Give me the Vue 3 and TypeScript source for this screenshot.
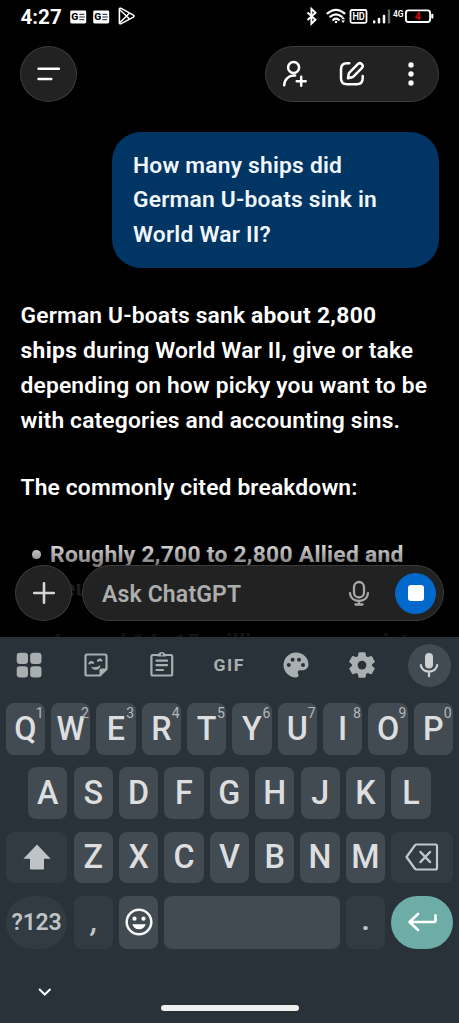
<script setup lang="ts">
interface Key {
  label: string
  hint?: string
}

const topRow: Key[] = 'QWERTYUIOP'.split('').map((label, i) => ({ label, hint: String((i + 1) % 10) }))
const homeRow: string[] = 'ASDFGHJKL'.split('')
const bottomRow: string[] = 'ZXCVBNM'.split('')
</script>

<template>
  <div class="screen">
    <div class="status">
      <span class="clock">4:27</span>
      <svg v-for="n in 2" :key="n" class="news" width="17" height="14" viewBox="0 0 17 14">
        <rect x="0.2" y="0.5" width="16" height="13" rx="1.4" fill="#fff" />
        <text x="1.200" y="10.300" font-size="9.500" font-weight="800" textLength="7" lengthAdjust="spacingAndGlyphs" fill="#000">G</text>
        <path d="M9.300 4.300h5M9.300 7h5.500M9.300 9.700h5" stroke="#222" stroke-width="1" />
      </svg>
      <svg class="play" width="18" height="18" viewBox="0 0 18 18" fill="none" stroke="#fff" stroke-linejoin="round">
        <path d="M1.4 2.2v13.6q.3 1.4 1.8.8l12.2-6.5q1.2-1 0-2L3.200 1.400q-1.500-.5-1.800.8z" stroke-width="1.6" />
        <path d="M2 3l9.600 9M2 15.500l9.600-9.500" stroke-width="1.500" />
      </svg>
      <svg class="signals" width="130" height="20" viewBox="0 0 130 20" fill="none" stroke="#fff">
        <path d="M2.500 5.500l8 7.300-4.100 3.900V1.800l4.100 3.900-8 7.300" stroke-width="1.900" />
        <g stroke-width="2.200" stroke-linecap="round">
          <path d="M22.500 6.300q8.500-7 17 0M25.300 9.600q5.700-4.500 11.400 0M28.200 12.800q2.800-2.300 5.600 0" />
        </g>
        <circle cx="31" cy="15" r="1.300" fill="#fff" stroke="none" />
        <path d="M36.200 12.200l1.900-2.400 1.900 2.400zM36.200 13.500l1.900 2.400 1.900-2.400z" fill="#fff" stroke="none" />
        <rect x="45.500" y="3" width="16" height="12.800" rx="1.500" stroke-width="1.800" />
        <text x="47.400" y="12.900" font-size="10" font-weight="600" textLength="12.400" lengthAdjust="spacingAndGlyphs" fill="#fff" stroke="none">HD</text>
        <path d="M69.200 14.500v.8M74 12V15.300M79 9V15.300" stroke-width="2.500" stroke-linecap="round" />
        <path d="M84 2.500V16.500" stroke="#666" stroke-width="2.400" />
        <text x="88" y="9.600" font-size="9.500" font-weight="600" textLength="10.600" lengthAdjust="spacingAndGlyphs" fill="#fff" stroke="none">4G</text>
        <rect x="100.900" y="3.400" width="24.200" height="11.600" rx="2.500" stroke-width="1.900" />
        <path d="M127.300 7.800v2.800" stroke-width="2.200" stroke-linecap="round" />
        <text x="109.800" y="12.900" font-size="10.500" font-weight="600" fill="#e00808" stroke="none">4</text>
      </svg>
    </div>

    <header class="topbar">
      <button class="round" aria-label="Menu">
        <svg width="26" height="16" viewBox="0 0 26 16" stroke="#fff" stroke-width="2.600" stroke-linecap="round">
          <path d="M2.600 2.700h20.200M2.600 13h12.600" />
        </svg>
      </button>
      <div class="actions">
        <svg class="person" width="28" height="28" viewBox="0 0 28 28" fill="none" stroke="#fff" stroke-width="2.500" stroke-linecap="round">
          <circle cx="13.600" cy="7.500" r="5.500" />
          <path d="M4.200 25.300c.3-6 4.600-9.800 9.500-9.800h1.400M21.200 16.700v9M16.700 21.200h9" />
        </svg>
        <svg width="28" height="28" viewBox="0 0 28 28" fill="none" stroke="#fff" stroke-width="2.500" stroke-linecap="round" stroke-linejoin="round">
          <path d="M11.300 3.300H9q-6 0-6 6v9q0 6 6 6h9.700q6 0 6-6v-2.200" />
          <path d="M10 18.300l.7-4.300q.2-1 .9-1.700l8.200-8.200a2.800 2.800 0 0 1 4 4l-8.200 8.200q-.7.7-1.600.9z" />
        </svg>
        <svg class="more" width="8" height="26" viewBox="0 0 8 26" fill="#fff">
          <circle cx="4" cy="4" r="2.700" /><circle cx="4" cy="13" r="2.700" /><circle cx="4" cy="22" r="2.700" />
        </svg>
      </div>
    </header>

    <main class="chat">
      <div class="bubble">How many ships did<br>German U-boats sink in<br>World War II?</div>
      <p class="answer">
        German U-boats sank <b>about 2,800<br>ships</b> during World War II, give or take<br>depending on how picky you want to be<br>with categories and accounting sins.
      </p>
      <p class="answer">The commonly cited breakdown:</p>
      <ul>
        <li>Roughly 2,700 to 2,800 Allied and<br>neutral merchant vessels</li>
        <li class="next">Around 14–15 million gross register</li>
      </ul>
      <div class="fade"></div>
      <div class="composer">
        <button class="round" aria-label="Add">
          <svg width="24" height="24" viewBox="0 0 24 24" stroke="#d5d5d5" stroke-width="2.600" stroke-linecap="round">
            <path d="M12 2.200v19.600M2.200 12h19.600" />
          </svg>
        </button>
        <div class="field">
          <span class="hint">Ask ChatGPT</span>
          <svg class="mic" width="22" height="26" viewBox="0 0 22 26" fill="none" stroke="#a8a8a8" stroke-width="2.300">
            <rect x="6" y="2" width="10" height="15.500" rx="5" />
            <path d="M2 13.200c.4 4.800 4.200 7.800 9 7.800s8.600-3 9-7.800M11 21v3.500M7.500 24.500h7" stroke-linecap="round" />
          </svg>
          <button class="stop" aria-label="Stop"><i></i></button>
        </div>
      </div>
    </main>

    <section class="keyboard">
      <div class="tools">
        <svg width="26" height="26" viewBox="0 0 26 26">
          <rect x="0.700" y="0.700" width="11.300" height="11.300" rx="3.300" /><rect x="14.200" y="0.700" width="11.300" height="11.300" rx="3.300" />
          <rect x="0.700" y="14.200" width="11.300" height="11.300" rx="3.300" /><rect x="14.200" y="14.200" width="11.300" height="11.300" rx="3.300" />
        </svg>
        <svg width="26" height="26" viewBox="0 0 26 26">
          <path d="M4 2.500h18q1.500 0 1.500 1.500V17l-6.500 6.500H4q-1.500 0-1.500-1.500V4q0-1.500 1.500-1.500z" fill="none" stroke="#a9aeb1" stroke-width="2.200" />
          <path d="M16.500 24v-5.700q0-1.800 1.800-1.800H24z" />
          <path d="M8 14.700q5.500 1.700 9.500-1.700-.6 4.600-4.200 4.800-3.800.2-5.300-3.100z" />
          <path d="M6.500 11.300q1.500-2.200 3.500-.5M15 8.700q1.700-2 3.300-.2" fill="none" stroke="#a9aeb1" stroke-width="2.300" stroke-linecap="round" />
        </svg>
        <svg width="26" height="26" viewBox="0 0 26 26" fill="none" stroke="#a9aeb1" stroke-width="2.200" stroke-linecap="round">
          <rect x="2.400" y="3" width="20.800" height="20.500" rx="1.500" />
          <path d="M8.500 3.500q1-3.500 4.300-3.500T17.100 3.500v1H8.500z" fill="#a9aeb1" stroke="none" />
          <path d="M7.500 8.700h10.600M7.500 13.200h10.600M7.500 18h6.500" />
          <circle cx="12.800" cy="2.600" r="1" fill="#283238" stroke="none" />
        </svg>
        <svg width="32" height="26" viewBox="0 0 32 26">
          <text class="gif" x="0.500" y="18.700" textLength="31.500" lengthAdjust="spacingAndGlyphs">GIF</text>
        </svg>
        <svg width="26" height="26" viewBox="0 0 26 26">
          <path d="M13 .5C6 .5.500 6.200.500 13S6 25.500 13 25.500c1.700 0 2.600-1 2.600-2.400 0-1.300-.8-1.600-.8-2.700 0-1.300 1-2.200 2.400-2.200h2.300c3.400 0 6-2.400 6-6C25.500 5.700 19.900.5 13 .5z" />
          <g fill="#283238"><circle cx="5.800" cy="13" r="2" /><circle cx="9.600" cy="7.700" r="2" /><circle cx="16" cy="7.700" r="2" /><circle cx="20" cy="13" r="2" /></g>
        </svg>
        <svg width="26" height="26" viewBox="0 0 26 26">
          <path d="M10.200 1h5.600l.7 3.700 2.200 1.200L22.300 4.700l2.800 5-2.900 2.500v1.800l2.900 2.500-2.800 5-3.600-1.200-2.200 1.200-.7 3.600h-5.600l-.7-3.600-2.200-1.200-3.600 1.200-2.800-5 2.900-2.500v-1.800L.900 9.700l2.800-5 3.600 1.200 2.200-1.200z" stroke="#a9aeb1" stroke-width="1.400" stroke-linejoin="round" />
          <circle cx="13" cy="13.100" r="4.400" fill="#283238" />
        </svg>
        <span class="voice">
          <svg width="22" height="26" viewBox="0 0 22 26" fill="none" stroke="#ced0d2" stroke-width="2.200">
            <rect x="7" y="1" width="8" height="15.500" rx="4" fill="#ced0d2" stroke="none" />
            <path d="M2.800 13c.5 4 4 6.600 8.200 6.600s7.700-2.600 8.200-6.600M11 19.600v4.600" stroke-linecap="round" />
          </svg>
        </span>
      </div>

      <div class="row">
        <div v-for="k in topRow" :key="k.label" class="key">{{ k.label }}<sup>{{ k.hint }}</sup></div>
      </div>
      <div class="row inset">
        <div v-for="k in homeRow" :key="k" class="key">{{ k }}</div>
      </div>
      <div class="row">
        <div class="key dim wide">
          <svg width="28" height="26" viewBox="0 0 28 26"><path d="M14 .5L27.600 14.800H21V24.600q0 1-1 1H8q-1 0-1-1V14.800H.400z" fill="#bfc3c6" /></svg>
        </div>
        <div v-for="k in bottomRow" :key="k" class="key">{{ k }}</div>
        <div class="key dim wide">
          <svg width="34" height="28" viewBox="0 0 34 28" fill="none" stroke="#c3c7ca" stroke-width="2.200" stroke-linejoin="round" stroke-linecap="round">
            <path d="M11.500 1.500H30.500q1.500 0 1.500 1.500v22q0 1.500-1.500 1.500H11.500q-1 0-1.700-1L1.500 14l8.300-11.500q.7-1 1.700-1z" />
            <path d="M15.500 9l9.500 10M25 9l-9.500 10" stroke-width="2.500" />
          </svg>
        </div>
      </div>
      <div class="row last">
        <div class="key dim wide pill symbols">?123</div>
        <div class="key dim comma">,</div>
        <div class="key">
          <svg width="28" height="28" viewBox="0 0 28 28">
            <circle cx="14" cy="14" r="12.300" fill="none" stroke="#f4f5f5" stroke-width="2.500" />
            <circle cx="9.500" cy="10.700" r="2.100" fill="#fff" /><circle cx="18.500" cy="10.700" r="2.100" fill="#fff" />
            <path d="M7.300 16.300h13.400q-1.600 5-6.700 5t-6.700-5z" fill="#fff" />
          </svg>
        </div>
        <div class="key space"></div>
        <div class="key dim dot">.</div>
        <div class="key wide pill enter">
          <svg width="30" height="20" viewBox="0 0 30 20" fill="none" stroke="#fff" stroke-width="2.600" stroke-linecap="round" stroke-linejoin="round">
            <path d="M11 2L2.500 10 11 18M3 10h24q1.500 0 1.500-1.500V3.300" />
          </svg>
        </div>
      </div>

      <div class="nav">
        <svg class="down" width="14" height="10" viewBox="0 0 14 10" fill="none" stroke="#fff" stroke-width="2"><path d="M1.100 2l5.700 5.500L12.500 2" /></svg>
        <div class="home"></div>
      </div>
    </section>
  </div>
</template>

<style>
body { margin: 0; background: #000; }
</style>

<style scoped>
* { box-sizing: border-box; }
button { padding: 0; font: inherit; }
svg { display: block; flex: none; }
.screen {
  width: 459px; height: 1023px; overflow: hidden; background: #000; color: #fff;
  font-family: Roboto, "Liberation Sans", sans-serif;
  display: flex; flex-direction: column;
}
.status { height: 46px; flex: none; display: flex; align-items: flex-start; padding: 7px 0 0 20.500px; }
.clock { font-size: 20.600px; line-height: 20px; font-weight: 700; width: 49.500px; }
.news { margin: 3px 6.300px 0 0; }
.play { margin: 0 0 0 1px; }
.signals { margin: 0 24.300px 0 auto; }
.topbar { height: 57px; flex: none; display: flex; justify-content: space-between; padding: 0 20px; }
.round {
  width: 57px; height: 56px; flex: none; border-radius: 50%; border: 1px solid #3b3b3b; background: #222;
  display: flex; align-items: center; justify-content: center;
}
.actions {
  width: 174px; height: 56px; border: 1px solid #3b3b3b; border-radius: 28px; background: #222;
  display: flex; align-items: center; padding: 0 23.500px 0 13.500px;
}
.person { margin-right: 30px; }
.more { margin-left: auto; }
.chat { position: relative; flex: none; height: 534px; overflow: hidden; padding: 29px 20px 0; font-size: 22.800px; line-height: 34.900px; font-weight: 600; letter-spacing: .160px; white-space: nowrap; }
.bubble {
  width: 327px; height: 136px; margin-left: auto; border-radius: 29px; background: #003564; color: #f1f6fc;
  padding: 16.500px 21px; letter-spacing: .200px;
}
.answer { margin: 31px 0 0 .500px; }
.answer + .answer { margin-top: 32px; }
b { font-weight: 700; letter-spacing: .330px; }
ul { list-style: none; margin: 32px 0 0; padding: 0 0 0 30px; font-weight: 700; letter-spacing: .280px; }
li { position: relative; }
li::before { content: ""; position: absolute; left: -18px; top: 12.500px; width: 8.500px; height: 8.500px; border-radius: 50%; background: #fff; }
.next { margin-top: 19px; }
.fade { position: absolute; left: 0; right: 0; top: 422px; bottom: 0; background: linear-gradient(transparent, rgba(0, 0, 0, .16) 20px, rgba(0, 0, 0, .45) 37px, rgba(0, 0, 0, .88) 58px, rgba(0, 0, 0, .93)); }
.composer { position: absolute; left: 15px; right: 15px; top: 462px; display: flex; gap: 10px; }
.field {
  flex: 1; height: 56px; border: 1px solid #3b3b3b; border-radius: 28px; background: #222;
  display: flex; align-items: center; padding: 0 7px 0 19px;
}
.hint { color: #adadad; font-size: 23px; flex: 1; padding-top: 4px; }
.mic { margin-right: 25px; }
.stop { width: 41px; height: 41px; border: 0; border-radius: 50%; background: #0169cc; display: flex; align-items: center; justify-content: center; }
.stop i { width: 16px; height: 16px; border-radius: 3px; background: #fff; }
.keyboard { flex: 1; background: #283238; display: flex; flex-direction: column; }
.tools { height: 56px; margin: 0 -3.500px 10px -4.500px; display: grid; grid-template-columns: repeat(7, 1fr); place-items: center; fill: #a9aeb1; }
.gif { font-size: 17px; font-weight: 700; letter-spacing: 1.500px; fill: #a9aeb1; }
.voice { width: 43px; height: 43px; border-radius: 50%; background: #434b52; display: flex; align-items: center; justify-content: center; }
.row { display: flex; gap: 6.200px; padding: 0 6px 0 5.700px; height: 51.500px; margin-bottom: 12.800px; flex: none; }
.inset { padding: 0 28.500px 0 28.200px; }
.key {
  flex: 1 1 0; min-width: 0; position: relative; border-radius: 8px; background: #434b52; color: #dcdedf;
  display: flex; align-items: center; justify-content: center; font-size: 32.300px; line-height: 1; font-weight: 500;
}
sup { position: absolute; right: 1.300px; top: 3.500px; font-size: 14px; line-height: 13px; font-weight: 400; color: #b4b9bb; }
.dim { background: #313b41; color: #bfc3c6; }
.wide { flex: 0 0 61.800px; }
.last { height: 53px; margin-bottom: 0; }
.last .key { flex: 0 0 39.200px; }
.last .wide { flex: 0 0 61.700px; }
.last .space { flex: 1; }
.last .pill { border-radius: 27px; }
.symbols { font-size: 23px; font-weight: 600; letter-spacing: -.200px; }
.comma { font-size: 28px; padding-left: 3px; font-style: italic; font-weight: 700; }
.dot { font-size: 28px; font-weight: 700; padding-bottom: 2px; }
.enter { background: #6eaca8; }
.nav { flex: 1; position: relative; }
.down { margin: 38px 0 0 38px; }
.home { width: 138px; height: 6px; border-radius: 3px; background: #eef0ee; margin: 8px auto 0; }
</style>
